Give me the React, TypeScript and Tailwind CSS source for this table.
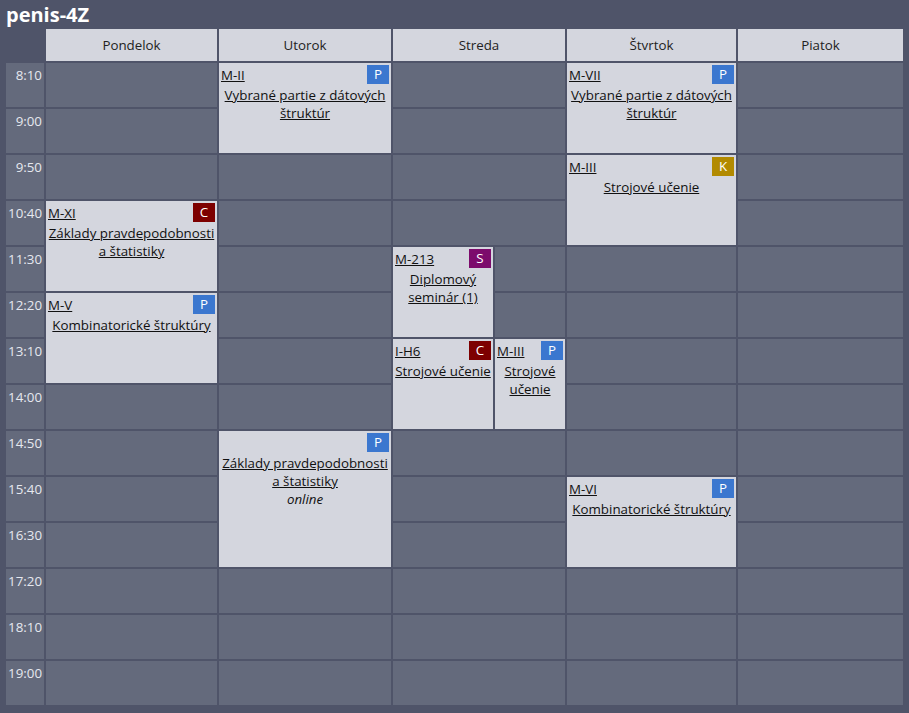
import React from "react";

type Ev = {
  span: number;
  room?: string;
  badge?: "P" | "C" | "S" | "K";
  title?: string;
  note?: string;
};
type Cell = Ev | null;

const badgeCls: Record<string, string> = {
  P: "bg-[#3b77cf]",
  C: "bg-[#7d0000]",
  S: "bg-[#7c0b6c]",
  K: "bg-[#b28a00]",
};

const times = [
  "8:10", "9:00", "9:50", "10:40", "11:30", "12:20", "13:10",
  "14:00", "14:50", "15:40", "16:30", "17:20", "18:10", "19:00",
];

const E = (n: number): Cell[] => Array.from({ length: n }, () => null);

const hCls: Record<number, string> = {
  1: "h-[44px]",
  2: "h-[90px]",
  3: "h-[136px]",
};

function EventCell({ ev }: { ev: Ev }) {
  return (
    <div className={`${hCls[ev.span]} bg-[#d4d6de] p-[2px] text-[#111] shrink-0`}>
      <div className="flex justify-between items-start h-[19px]">
        <span className="underline leading-[21px]">{ev.room ?? ""}</span>
        {ev.badge && (
          <span
            className={`${badgeCls[ev.badge]} w-[22px] h-[19px] flex items-center justify-center text-white leading-none`}
          >
            {ev.badge}
          </span>
        )}
      </div>
      <div className="text-center leading-[18px] mt-[2px]">
        <span className="underline">{ev.title}</span>
        {ev.note && <div className="italic">{ev.note}</div>}
      </div>
    </div>
  );
}

function Cells({ cells }: { cells: Cell[] }) {
  return (
    <>
      {cells.map((c, i) =>
        c ? (
          <EventCell key={i} ev={c} />
        ) : (
          <div key={i} className="h-[44px] bg-[#646a7c] shrink-0" />
        )
      )}
    </>
  );
}

function Header({ name }: { name: string }) {
  return (
    <div className="h-[32px] bg-[#d4d6de] flex items-center justify-center pt-[2px] text-[#222] shrink-0">
      {name}
    </div>
  );
}

const VDS = "Vybrané partie z dátových štruktúr";
const ZPS = "Základy pravdepodobnosti a štatistiky";
const SU = "Strojové učenie";
const KS = "Kombinatorické štruktúry";

const pon: Cell[] = [
  ...E(3),
  { span: 2, room: "M-XI", badge: "C", title: ZPS },
  { span: 2, room: "M-V", badge: "P", title: KS },
  ...E(7),
];
const uto: Cell[] = [
  { span: 2, room: "M-II", badge: "P", title: VDS },
  ...E(6),
  { span: 3, badge: "P", title: ZPS, note: "online" },
  ...E(3),
];
const stv: Cell[] = [
  { span: 2, room: "M-VII", badge: "P", title: VDS },
  { span: 2, room: "M-III", badge: "K", title: SU },
  ...E(5),
  { span: 2, room: "M-VI", badge: "P", title: KS },
  ...E(3),
];
const pia: Cell[] = E(14);

export default function App() {
  return (
    <div
      className="w-[909px] h-[713px] bg-[#4f5469] px-[6px] text-[13.33px] overflow-hidden"
      style={{ fontFamily: '"Open Sans", "Noto Sans", sans-serif' }}
    >
      <div className="h-[29px] text-white font-bold text-[20px] leading-[29px]">penis-4Z</div>
      <div className="flex gap-[2px]">
        <div className="w-[38px] flex flex-col gap-[2px]">
          <div className="h-[32px]" />
          {times.map((t) => (
            <div
              key={t}
              className="h-[44px] bg-[#646a7c] text-right pr-[2px] pt-[3px] leading-[19px] text-[#e6e8ef]"
            >
              {t}
            </div>
          ))}
        </div>
        <div className="w-[171px] flex flex-col gap-[2px]">
          <Header name="Pondelok" />
          <Cells cells={pon} />
        </div>
        <div className="w-[172px] flex flex-col gap-[2px]">
          <Header name="Utorok" />
          <Cells cells={uto} />
        </div>
        <div className="w-[172px] flex flex-col gap-[2px]">
          <Header name="Streda" />
          <Cells cells={E(4)} />
          <div className="flex gap-[2px]">
            <div className="w-[100px] flex flex-col gap-[2px]">
              <Cells
                cells={[
                  { span: 2, room: "M-213", badge: "S", title: "Diplomový seminár (1)" },
                  { span: 2, room: "I-H6", badge: "C", title: SU },
                ]}
              />
            </div>
            <div className="w-[70px] flex flex-col gap-[2px]">
              <Cells cells={[...E(2), { span: 2, room: "M-III", badge: "P", title: SU }]} />
            </div>
          </div>
          <Cells cells={E(6)} />
        </div>
        <div className="w-[169px] flex flex-col gap-[2px]">
          <Header name="Štvrtok" />
          <Cells cells={stv} />
        </div>
        <div className="w-[165px] flex flex-col gap-[2px]">
          <Header name="Piatok" />
          <Cells cells={pia} />
        </div>
      </div>
    </div>
  );
}
